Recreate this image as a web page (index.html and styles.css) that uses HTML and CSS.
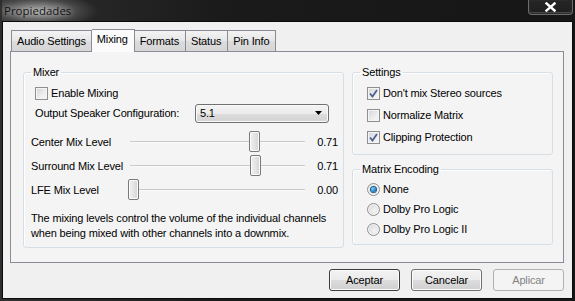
FILE: index.html
```html
<!DOCTYPE html>
<html>
<head>
<meta charset="utf-8">
<link rel="stylesheet" href="styles.css">
</head>
<body>
<div class="window">
  <div class="titlebar">
    <span class="title">Propiedades</span>
    <div class="close">
      <svg width="13" height="10" viewBox="0 0 13 10"><path d="M2.5 1.5 L10.5 8.5 M10.5 1.5 L2.5 8.5" stroke="#fff" stroke-width="2.4" stroke-linecap="square"/></svg>
    </div>
  </div>
  <div class="client">
    <div class="tabs">
      <div class="tab">Audio Settings</div>
      <div class="tab active">Mixing</div>
      <div class="tab">Formats</div>
      <div class="tab">Status</div>
      <div class="tab">Pin Info</div>
    </div>
    <div class="panel">
      <fieldset class="group mixer">
        <legend>Mixer</legend>
        <div class="check-row first"><span class="cb"></span><span>Enable Mixing</span></div>
        <div class="config-row">
          <span>Output Speaker Configuration:</span>
          <div class="combo"><span>5.1</span>
            <svg width="7" height="4" viewBox="0 0 7 4"><path d="M0 0 H7 L3.5 4 Z" fill="#000"/></svg>
          </div>
        </div>
        <div class="slider-row first-slider">
          <span class="slabel">Center Mix Level</span>
          <div class="track"><div class="thumb" style="left: calc(0.72 * (100% - 11px))"></div></div>
          <span class="val">0.71</span>
        </div>
        <div class="slider-row">
          <span class="slabel">Surround Mix Level</span>
          <div class="track"><div class="thumb" style="left: calc(0.725 * (100% - 11px))"></div></div>
          <span class="val">0.71</span>
        </div>
        <div class="slider-row">
          <span class="slabel">LFE Mix Level</span>
          <div class="track"><div class="thumb" style="left: calc(0 * (100% - 11px))"></div></div>
          <span class="val">0.00</span>
        </div>
        <p class="desc">The mixing levels control the volume of the individual channels<br>when being mixed with other channels into a downmix.</p>
      </fieldset>
      <div class="right-col">
        <fieldset class="group settings">
          <legend>Settings</legend>
          <div class="check-row first"><span class="cb checked"><svg width="9" height="9" viewBox="0 0 9 9"><path d="M1 4.5 L3.5 7.5 L8 1" fill="none" stroke="#4d5f8f" stroke-width="1.8"/></svg></span><span>Don't mix Stereo sources</span></div>
          <div class="check-row"><span class="cb"></span><span>Normalize Matrix</span></div>
          <div class="check-row"><span class="cb checked"><svg width="9" height="9" viewBox="0 0 9 9"><path d="M1 4.5 L3.5 7.5 L8 1" fill="none" stroke="#4d5f8f" stroke-width="1.8"/></svg></span><span>Clipping Protection</span></div>
        </fieldset>
        <fieldset class="group matrix">
          <legend>Matrix Encoding</legend>
          <div class="radio-row first"><span class="rb on"></span><span>None</span></div>
          <div class="radio-row"><span class="rb"></span><span>Dolby Pro Logic</span></div>
          <div class="radio-row"><span class="rb"></span><span>Dolby Pro Logic II</span></div>
        </fieldset>
      </div>
    </div>
    <div class="buttons">
      <div class="btn default">Aceptar</div>
      <div class="btn">Cancelar</div>
      <div class="btn disabled">Aplicar</div>
    </div>
  </div>
</div>
</body>
</html>
```

FILE: styles.css
```css
html, body {
  margin: 0;
  padding: 0;
  background: #1c1c1c;
}
body {
  width: 575px;
  height: 301px;
  overflow: hidden;
  font-family: "Liberation Sans", Arial, sans-serif;
  font-size: 11px;
  letter-spacing: -0.15px;
  color: #000;
}
.window {
  width: 575px;
  height: 301px;
  box-sizing: border-box;
  padding: 0 2px 2px 2px;
  display: flex;
  flex-direction: column;
  background: linear-gradient(90deg, #2e2e2e 0%, #1a1a1a 40%, #161616 100%);
}
.titlebar {
  height: 21px;
  flex: none;
  display: flex;
  align-items: flex-start;
  background: radial-gradient(ellipse 60px 18px at 36px 11px, rgba(200,200,200,0.8), rgba(140,140,140,0.3) 65%, rgba(0,0,0,0) 100%);
}
.title {
  font-family: "Open Sans", "Noto Sans", sans-serif;
  font-size: 11.5px;
  letter-spacing: 0;
  line-height: 21px;
  padding-left: 2px;
  color: #141414;
  text-shadow: 0 0 6px rgba(255,255,255,0.6);
}
.close {
  margin-left: auto;
  margin-right: 0;
  width: 45px;
  height: 15px;
  box-sizing: border-box;
  border: 1px solid #6c6c6c;
  border-top: none;
  border-radius: 0 0 4px 4px;
  box-shadow: inset 0 0 0 1px #2a2a2a, inset 0 -1px 0 1px #4a4a4a;
  background: linear-gradient(#262626, #1e1e1e);
  display: flex;
  align-items: center;
  justify-content: center;
}
.client {
  flex: 1;
  border: 1px solid #0a0a0a;
  background: #f0f0f0;
  padding: 8px 8px 0 7px;
  display: flex;
  flex-direction: column;
}
.tabs {
  display: flex;
  align-items: flex-end;
  margin-left: 1px;
  height: 22px;
  margin-bottom: -1px;
  position: relative;
  z-index: 1;
}
.tab {
  height: 21px;
  box-sizing: border-box;
  border: 1px solid #898c95;
  border-bottom: none;
  border-left: none;
  padding: 0 6px 0 5px;
  line-height: 20px;
  background: linear-gradient(#f3f3f3, #e6e6e6 50%, #dcdcdc 51%, #d6d6d6);
  margin-bottom: 1px;
}
.tab:first-child {
  border-left: 1px solid #898c95;
  padding-left: 5px;
  padding-right: 5px;
}
.tab.active {
  height: 23px;
  margin-bottom: 0;
  background: #fbfbfb;
  line-height: 19px;
  padding: 0 6px 0 5px;
  border-left: none;
}
.panel {
  border: 1px solid #898c95;
  background: #f4f4f4;
  padding: 13px 10px 14px 12px;
  display: flex;
  gap: 8px;
}
.group {
  margin: 0;
  min-width: 0;
  border: 1px solid #d5dfe5;
  border-radius: 3px;
  box-shadow: inset 1px 1px 0 #fff;
  padding: 0 5px 6px 7px;
}
.group legend {
  padding: 0 2px;
  line-height: 14px;
  margin-left: 0;
}
.mixer {
  width: 321px;
  box-sizing: border-box;
  flex: none;
}
.right-col {
  flex: 1;
  display: flex;
  flex-direction: column;
  gap: 7px;
}
.check-row, .radio-row {
  display: flex;
  align-items: center;
  height: 16px;
  gap: 3px;
  margin-left: 4px;
  margin-top: 6px;
}
.check-row.first, .radio-row.first {
  margin-top: 6px;
}
.settings .check-row, .matrix .radio-row {
  margin-left: 7px;
}
.settings {
  padding-bottom: 9px;
}
.matrix .radio-row {
  margin-top: 4px;
}
.matrix .radio-row.first {
  margin-top: 5px;
}
.matrix {
  padding-bottom: 7px;
}
.cb {
  width: 13px;
  height: 13px;
  box-sizing: border-box;
  border: 1px solid #8e8f8f;
  background: linear-gradient(135deg, #d0d3d6 0%, #eeeeef 60%, #f6f6f6 100%);
  box-shadow: inset 0 0 0 1px #f4f4f4;
  display: flex;
  align-items: center;
  justify-content: center;
  flex: none;
}
.rb {
  width: 13px;
  height: 13px;
  box-sizing: border-box;
  border-radius: 50%;
  border: 1px solid #8e8f8f;
  background: radial-gradient(circle at 60% 60%, #f4f4f4 0%, #dcdcdc 70%, #cfcfcf 100%);
  box-shadow: inset 0 0 0 1px #f7f7f7;
  flex: none;
  display: flex;
  align-items: center;
  justify-content: center;
}
.rb.on::after {
  content: "";
  width: 5px;
  height: 5px;
  border-radius: 50%;
  background: radial-gradient(circle at 35% 35%, #8fd6f8 0%, #2a8ccc 50%, #0c4e86 100%);
  box-shadow: 0 0 0 1px #1d5b91;
}
.config-row {
  display: flex;
  align-items: center;
  height: 20px;
  margin-top: 2px;
  margin-left: 4px;
}
.combo {
  margin-left: auto;
  margin-right: 9px;
  width: 134px;
  height: 19px;
  box-sizing: border-box;
  border: 1px solid #707070;
  border-radius: 3px;
  background: linear-gradient(#f4f4f4, #ebebeb 50%, #dedede 51%, #d2d2d2);
  box-shadow: inset 0 0 0 1px #fafafa;
  display: flex;
  align-items: center;
  justify-content: space-between;
  padding: 0 6px 0 4px;
}
.slider-row {
  display: grid;
  grid-template-columns: 97px 179px 1fr;
  align-items: center;
  height: 22px;
  margin-top: 2px;
}
.slider-row.first-slider {
  margin-top: 8px;
}
.track {
  position: relative;
  height: 22px;
}
.track::before {
  content: "";
  position: absolute;
  left: 2px;
  right: 2px;
  top: 10px;
  height: 1px;
  background: #c9c9c9;
  border-bottom: 1px solid #fbfbfb;
}
.thumb {
  position: absolute;
  top: 0;
  width: 11px;
  height: 21px;
  box-sizing: border-box;
  border: 1px solid #7a7a7a;
  border-radius: 2px;
  background: linear-gradient(90deg, #f2f2f2, #e4e4e4 50%, #d4d4d4);
  box-shadow: inset 0 0 0 1px #fbfbfb;
}
.val {
  text-align: right;
}
.desc {
  margin: 10px 0 0 0;
  line-height: 15px;
}
.buttons {
  display: flex;
  justify-content: flex-end;
  gap: 11px;
  margin-top: 6px;
}
.btn {
  width: 71px;
  height: 22px;
  box-sizing: border-box;
  border: 1px solid #707070;
  border-radius: 3px;
  background: linear-gradient(#f2f2f2, #ebebeb 50%, #dddddd 51%, #cfcfcf);
  box-shadow: inset 0 0 0 1px #fcfcfc;
  display: flex;
  align-items: center;
  justify-content: center;
}
.btn.default {
  border-color: #3c3c3c;
}
.btn.disabled {
  border-color: #adb2b5;
  background: #f4f4f4;
  color: #838383;
  box-shadow: none;
}
```
